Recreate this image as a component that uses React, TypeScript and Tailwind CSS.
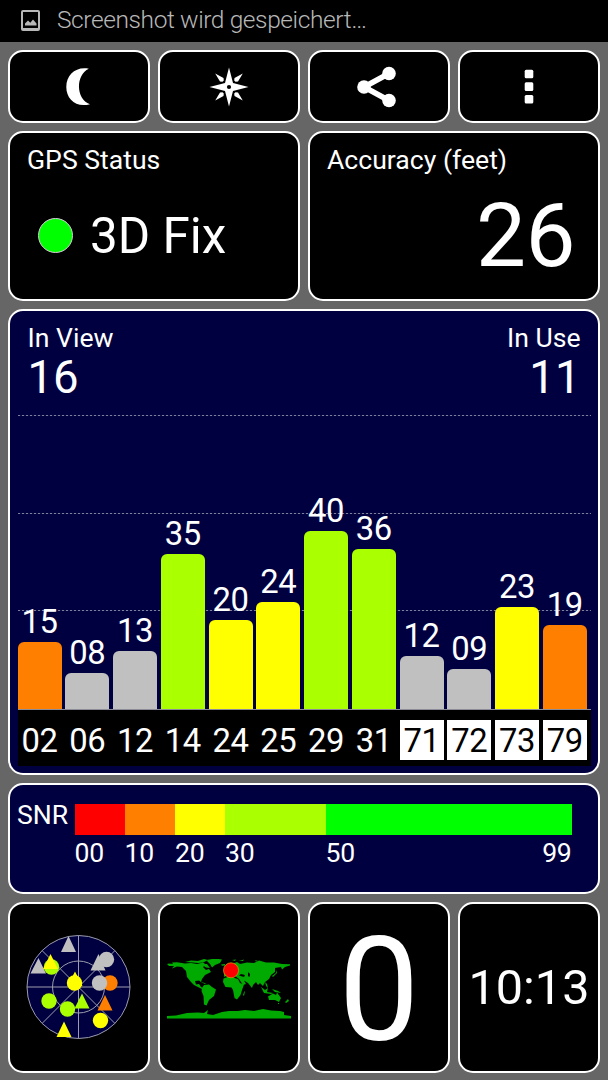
import type { ReactNode } from "react"

const bars = [
  { id: "02", snr: "15" },
  { id: "06", snr: "08", idle: true },
  { id: "12", snr: "13", idle: true },
  { id: "14", snr: "35" },
  { id: "24", snr: "20" },
  { id: "25", snr: "24" },
  { id: "29", snr: "40" },
  { id: "31", snr: "36" },
  { id: "71", snr: "12", idle: true, glonass: true },
  { id: "72", snr: "09", idle: true, glonass: true },
  { id: "73", snr: "23", glonass: true },
  { id: "79", snr: "19", glonass: true },
]

const scale = [
  { label: "00", cell: "w-[50px]", fill: "bg-[#ff0000]" },
  { label: "10", cell: "w-[50.5px]", fill: "bg-[#ff8000]" },
  { label: "20", cell: "w-[50px]", fill: "bg-[#ffff00]" },
  { label: "30", cell: "w-[100.5px]", fill: "bg-[#aaff00]" },
  { label: "50", cell: "flex-1", fill: "bg-[#00ff00]" },
]

function barColor(bar: { snr: string; idle?: boolean }) {
  const snr = Number(bar.snr)
  if (bar.idle) return "bg-[#c0c0c0]"
  if (snr < 20) return "bg-[#ff8000]"
  if (snr < 30) return "bg-[#ffff00]"
  return "bg-[#aaff00]"
}

function Panel({ className = "", children }: { className?: string; children: ReactNode }) {
  return <div className={`rounded-[15px] border-2 border-white ${className}`}>{children}</div>
}

function MoonIcon() {
  return (
    <svg width="26" height="40" viewBox="0 0 26 40" fill="#fff">
      <path d="M22.800 1.800C10-.8.300 8 .300 20s9.500 21 23.700 17.200C9.500 32 9.500 8 22.800 1.800z" />
    </svg>
  )
}

function CompassIcon() {
  return (
    <svg width="40" height="40" viewBox="-20 -20 40 40" fill="#fff">
      <path d="M0-19.500 4-4 19.500 0 4 4 0 19.500-4 4-19.500 0-4-4z" />
      <path d="M-13.800-13.500-5.500-9-5.200-6.500-6.500-5.200-9-5.500zM13.800-13.500 9-5.500 6.500-5.200 5.200-6.500 5.500-9zM13.800 13.500 5.500 9 5.200 6.500 6.500 5.200 9 5.500zM-13.800 13.500-9 5.500-6.500 5.200-5.200 6.500-5.500 9z" />
      <circle r="2.100" fill="#000" />
    </svg>
  )
}

function ShareIcon() {
  return (
    <svg width="40" height="42" viewBox="0 0 40 42" fill="#fff">
      <path d="M32 7.500 7 21l25 13.500" fill="none" stroke="#fff" strokeWidth="5.500" />
      <circle cx="32" cy="7.500" r="6.800" />
      <circle cx="7" cy="21" r="6.800" />
      <circle cx="32" cy="34.500" r="6.800" />
    </svg>
  )
}

function MoreIcon() {
  return (
    <svg width="10" height="36" viewBox="0 0 10 36" fill="#fff">
      <rect x=".7" y=".7" width="8.600" height="8.600" rx="1.500" />
      <rect x=".7" y="13.300" width="8.600" height="8.600" rx="1.500" />
      <rect x=".7" y="25.900" width="8.600" height="8.600" rx="1.500" />
    </svg>
  )
}

function Sky() {
  return (
    <svg width="106" height="106" viewBox="-52.500 -53 106 106">
      <circle r="51.500" fill="#000040" />
      <g fill="none" stroke="#9c9cae" strokeWidth="1">
        <circle r="51.500" />
        <circle r="26" />
        <path d="M-51.500 0h103M0-51.500v103M-36.400-36.400 36.400 36.400M36.400-36.400-36.400 36.400" />
      </g>
      <g fill="#c0c0c0">
        <path d="M-10-51-2.500-35h-15zM-40-29-32.500-13.500h-15.500zM20-33 27-16.500H12z" />
        <circle cx="28" cy="-27.500" r="7.700" />
      </g>
      <circle cx="31.500" cy="-4" r="7.700" fill="#ff8000" />
      <circle cx="21" cy="-4" r="7.700" fill="#c0c0c0" />
      <path d="M26.500 8 34 23.500H19z" fill="#ff8000" />
      <g fill="#aaff00">
        <circle cx="-27" cy="-20" r="7.700" />
        <circle cx="-29.500" cy="14" r="7.700" />
        <circle cx="-11" cy="22" r="7.700" />
        <path d="M3.500 6.500 11 21.500H-4z" />
      </g>
      <g fill="#ffff00">
        <path d="M-28-33-20.500-18h-15zM-3.500-15.500 4-1h-15zM-14.500 34.500-7 50h-15z" />
        <circle cx="-4" cy="-4" r="7.700" />
        <circle cx="22" cy="33.500" r="7.700" />
      </g>
    </svg>
  )
}

function WorldMap() {
  return (
    <svg width="124" height="62" viewBox="0 0 124 62" fill="#00aa00">
      <path d="M0 5 2 4.500 6 5 5 3.500 10 3.200 18 4.500 24 4 30 5 36 3.500 39 5.500 36 8 39 11 42 10 44 13 41 14.500 38 16 35 20 34 23 32 21.500 28 22 29 25.500 32 25 34 28 37 29.500 36 30.500 32 28.500 27 26 24 23 20 18 19 12 15 8 10 7.500 5 9.500 7 7 2 7z" />
      <path d="M18 3 24 1.500 31 2 37 0 41 1 36 3.500 31 4 26 3.500zM34 5l6 0 3 4-4-.500zM41 .700 48-.500 55 .500 53 4 48 6 45 8.500 43 5 40 2zM54 5.500 58 5 58 6.500 55 6.700zM33 22.500 39 24.500 38 25z" />
      <path d="M37 26 42 25.500 45 28 49 30.500 47 37 42 41 39.500 46.500 37 45.500 36.500 37 34.500 32 35 29z" />
      <path d="M56.500 19.500 62 17.500 66 18.500 71 20 73 24 77 25.500 75 31 73.500 36 70 40.500 67.500 39 66 31 64.500 28.500 58.500 28 56 23z" />
      <path d="M57 18 57 14 61 12 62 8 65 5 70 3 73 5 80 3.500 87 4 92 1.500 99 3.500 107 3.500 115 5 123 5.300 123 6.500 118 8 115 10.500 114 8 108 9 108 13 104 16 102 20 98 23 96 27 93 24 91 26 89 23 86 26 85 29 81 24 77 21.500 79 25 76 26 72 20 68 17 65 18 62 15.500z" />
      <path d="M74 15 78 16 77 18 72 16.500zM81 13 83 15 82.500 18 81 17z" fill="#000" />
      <path d="M94 28 98 31 101 29 100 33 106 34 104 35 97 34zM105 30 111 32 114 34 108 33zM98 23l2 2 1 4-2-2zM105 17 109 14 109 11 110 14 106 18zM77 33 78 32 77 37 76 36zM60 12 61 9 60 8 59 11zM72 2 77 .500 76 2zM65 1 69 .500 68 2zM88 1 91 2 89 2.500z" />
      <path d="M101 37.500 106 34.500 109 36 110 33.500 114 39 112 43 108 41 102 41zM118 43 121 40 122 42 119 44zM111 44h1v1h-1z" />
      <path d="M0 57 9 56.500 20 54 31 53.500 37 54 41 51 40 55 46 56 55 53 62 52 71 52 78 51 87 52 96 50 104 51.500 113 52 117 53 117 56 124 57 124 59.500 0 59.500z" />
      <circle cx="64" cy="11.300" r="7.500" fill="#f00" stroke="#d8a800" strokeWidth=".7" />
    </svg>
  )
}

export default function App() {
  return (
    <div className="flex h-[1080px] w-[608px] flex-col overflow-hidden bg-[#666] font-['Roboto',sans-serif] text-white">
      <header className="flex h-[42px] shrink-0 items-center bg-black pl-5 text-[#b8b8b8]">
        <svg width="21" height="22" viewBox="0 0 21 22">
          <rect x="2" y="1" width="17" height="19" rx="1" fill="none" stroke="currentColor" strokeWidth="2" />
          <path d="M2 19h17" stroke="currentColor" strokeWidth="2" />
          <path d="M5 15.500v-2L8 10.500l2.300 2.200L13 9.500l3.500 4v2z" fill="currentColor" />
        </svg>
        <span className="-mt-0.5 ml-4 text-[24.500px] leading-none font-light tracking-[-0.4px]">
          Screenshot wird gespeichert…
        </span>
      </header>

      <main className="flex flex-col gap-2 px-2 pt-2">
        <div className="grid h-[73px] grid-cols-4 gap-2">
          <Panel className="flex items-center justify-center bg-black"><MoonIcon /></Panel>
          <Panel className="flex items-center justify-center bg-black"><CompassIcon /></Panel>
          <Panel className="flex items-center justify-center bg-black pr-1"><ShareIcon /></Panel>
          <Panel className="flex items-center justify-center bg-black"><MoreIcon /></Panel>
        </div>

        <div className="grid h-[169.500px] grid-cols-2 gap-2">
          <Panel className="bg-black px-[17px] pt-3">
            <h2 className="text-[26.600px] leading-[30px]">GPS Status</h2>
            <div className="mt-[29px] flex items-center pl-[11px]">
              <span className="size-[35px] rounded-full border border-[#d9c8d9] bg-[#00ff00]" />
              <span className="mt-0.5 ml-[17px] text-[49.400px] leading-[60px]">3D Fix</span>
            </div>
          </Panel>
          <Panel className="bg-black px-[17px] pt-3">
            <h2 className="text-[26.600px] leading-[30px]">Accuracy (feet)</h2>
            <p className="mt-[19px] pr-[6px] text-right text-[89px] leading-[84px] tracking-[-0.5px]">26</p>
          </Panel>
        </div>

        <Panel className="flex h-[466.500px] flex-col bg-[#000040] px-[7.500px] pt-3">
          <div className="flex justify-between px-[10px]">
            <div>
              <p className="text-[26.600px] leading-[30px]">In View</p>
              <p className="text-[45.500px] leading-[49px]">16</p>
            </div>
            <div className="text-right">
              <p className="text-[26.600px] leading-[30px]">In Use</p>
              <p className="text-[45.500px] leading-[49px]">11</p>
            </div>
          </div>

          <div className="relative mt-[13.500px] h-[294px] w-[573px] shrink-0">
            <div className="absolute inset-0 flex flex-col gap-[96.700px]">
              {[0, 1, 2].map((line) => (
                <div
                  key={line}
                  className="h-px bg-[repeating-linear-gradient(90deg,#7e7e9e_0_2.500px,#101048_2.500px_4px)]"
                />
              ))}
            </div>
            <div className="relative grid h-full grid-cols-12">
              {bars.map((bar) => (
                <div key={bar.id} className="flex w-[44px] flex-col items-center justify-end">
                  <span className="text-[32.800px] leading-[39px] tracking-[-0.4px]">{bar.snr}</span>
                  <div
                    className={`w-full rounded-t-[6px] ${barColor(bar)}`}
                    style={{ height: Number(bar.snr) * 4.44 }}
                  />
                </div>
              ))}
            </div>
          </div>

          <div className="grid h-[56.500px] w-[573px] grid-cols-12 border-t border-[#8c8c99] bg-black pt-[10px]">
            {bars.map((bar) => (
              <div
                key={bar.id}
                className={`flex h-10 w-[44px] items-center justify-center pt-[3px] text-[32.800px] leading-none tracking-[-0.4px] ${
                  bar.glonass ? "bg-white text-black" : ""
                }`}
              >
                {bar.id}
              </div>
            ))}
          </div>
        </Panel>

        <Panel className="flex h-[111px] bg-[#000040] pt-[19px] pl-[7px]">
          <span className="w-[57.500px] text-[26.600px] leading-[22px]">SNR</span>
          <div className="w-[497px]">
            <div className="flex">
              {scale.map((step) => (
                <div key={step.label} className={step.cell}>
                  <div className={`h-[31px] ${step.fill}`} />
                  <div className="mt-[3px] flex justify-between text-[26.600px] leading-[30px] tracking-[-0.3px]">
                    <span>{step.label}</span>
                    {step.label === "50" && <span>99</span>}
                  </div>
                </div>
              ))}
            </div>
          </div>
        </Panel>

        <div className="grid h-[170.500px] grid-cols-4 gap-2">
          <Panel className="flex items-center justify-center bg-black"><Sky /></Panel>
          <Panel className="flex items-center justify-center bg-black pt-1.5 pr-px"><WorldMap /></Panel>
          <Panel className="flex items-center justify-center bg-black pt-2 text-[144px] leading-none">0</Panel>
          <Panel className="flex items-center justify-center bg-black pt-0.5 text-[48.500px] leading-none">10:13</Panel>
        </div>
      </main>
    </div>
  )
}
